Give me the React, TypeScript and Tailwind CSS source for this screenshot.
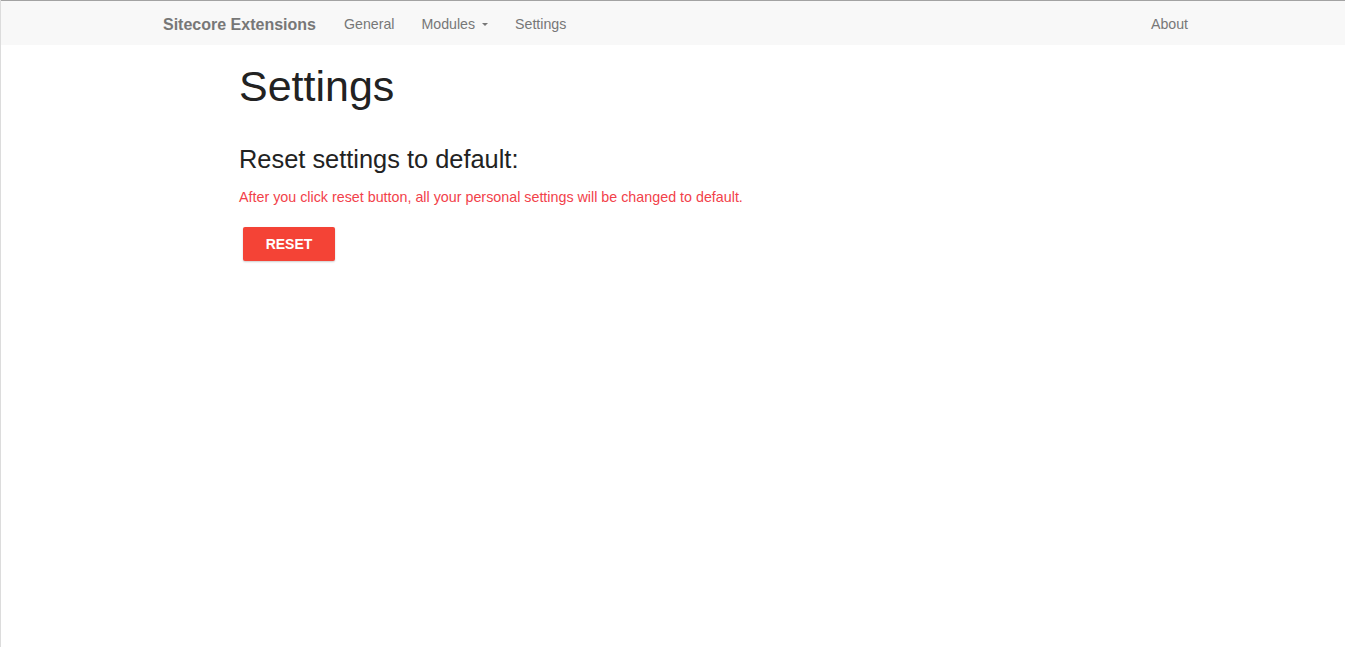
import { useState } from "react";

const navLinks = ["General", "Modules", "Settings"];

function Navbar() {
  return (
    <nav className="h-[45px] bg-[#f8f8f8] border-t border-[#a3a3a3] flex items-center pt-[3px] pl-[162px] pr-[157px] text-[14.2px] text-[#777]">
      <a href="#" className="text-[16px] font-bold text-[#777]">Sitecore Extensions</a>
      <ul className="flex items-center ml-[28px] gap-[27px]">
        {navLinks.map((l) => (
          <li key={l}>
            <a href="#" className="flex items-center hover:text-[#333]">
              {l}
              {l === "Modules" && (
                <span className="ml-[7px] mt-[1px] w-0 h-0 border-x-[3px] border-x-transparent border-t-[3px] border-t-[#777]" />
              )}
            </a>
          </li>
        ))}
      </ul>
      <a href="#" className="ml-auto hover:text-[#333]">About</a>
    </nav>
  );
}

export default function App() {
  const [done, setDone] = useState(false);
  return (
    <div className="min-h-[647px] bg-white border-l border-[#dcdcdc] font-['Liberation_Sans',Arial,sans-serif]">
      <Navbar />
      <main className="pl-[238px]">
        <h1 className="mt-[20px] text-[43px] leading-none text-[#222]">Settings</h1>
        <h3 className="mt-[39px] text-[25.4px] leading-none text-[#222]">Reset settings to default:</h3>
        <p className="mt-[15px] text-[14.3px] leading-[20px] text-[#f2414a]">
          After you click reset button, all your personal settings will be changed to default.
        </p>
        <button
          onClick={() => setDone(!done)}
          className="mt-[20px] ml-[4px] h-[34px] w-[92px] rounded-[2px] bg-[#f44336] text-white text-[14px] font-bold shadow-[0_1px_2px_rgba(0,0,0,0.2)]"
        >
          RESET
        </button>
      </main>
    </div>
  );
}
